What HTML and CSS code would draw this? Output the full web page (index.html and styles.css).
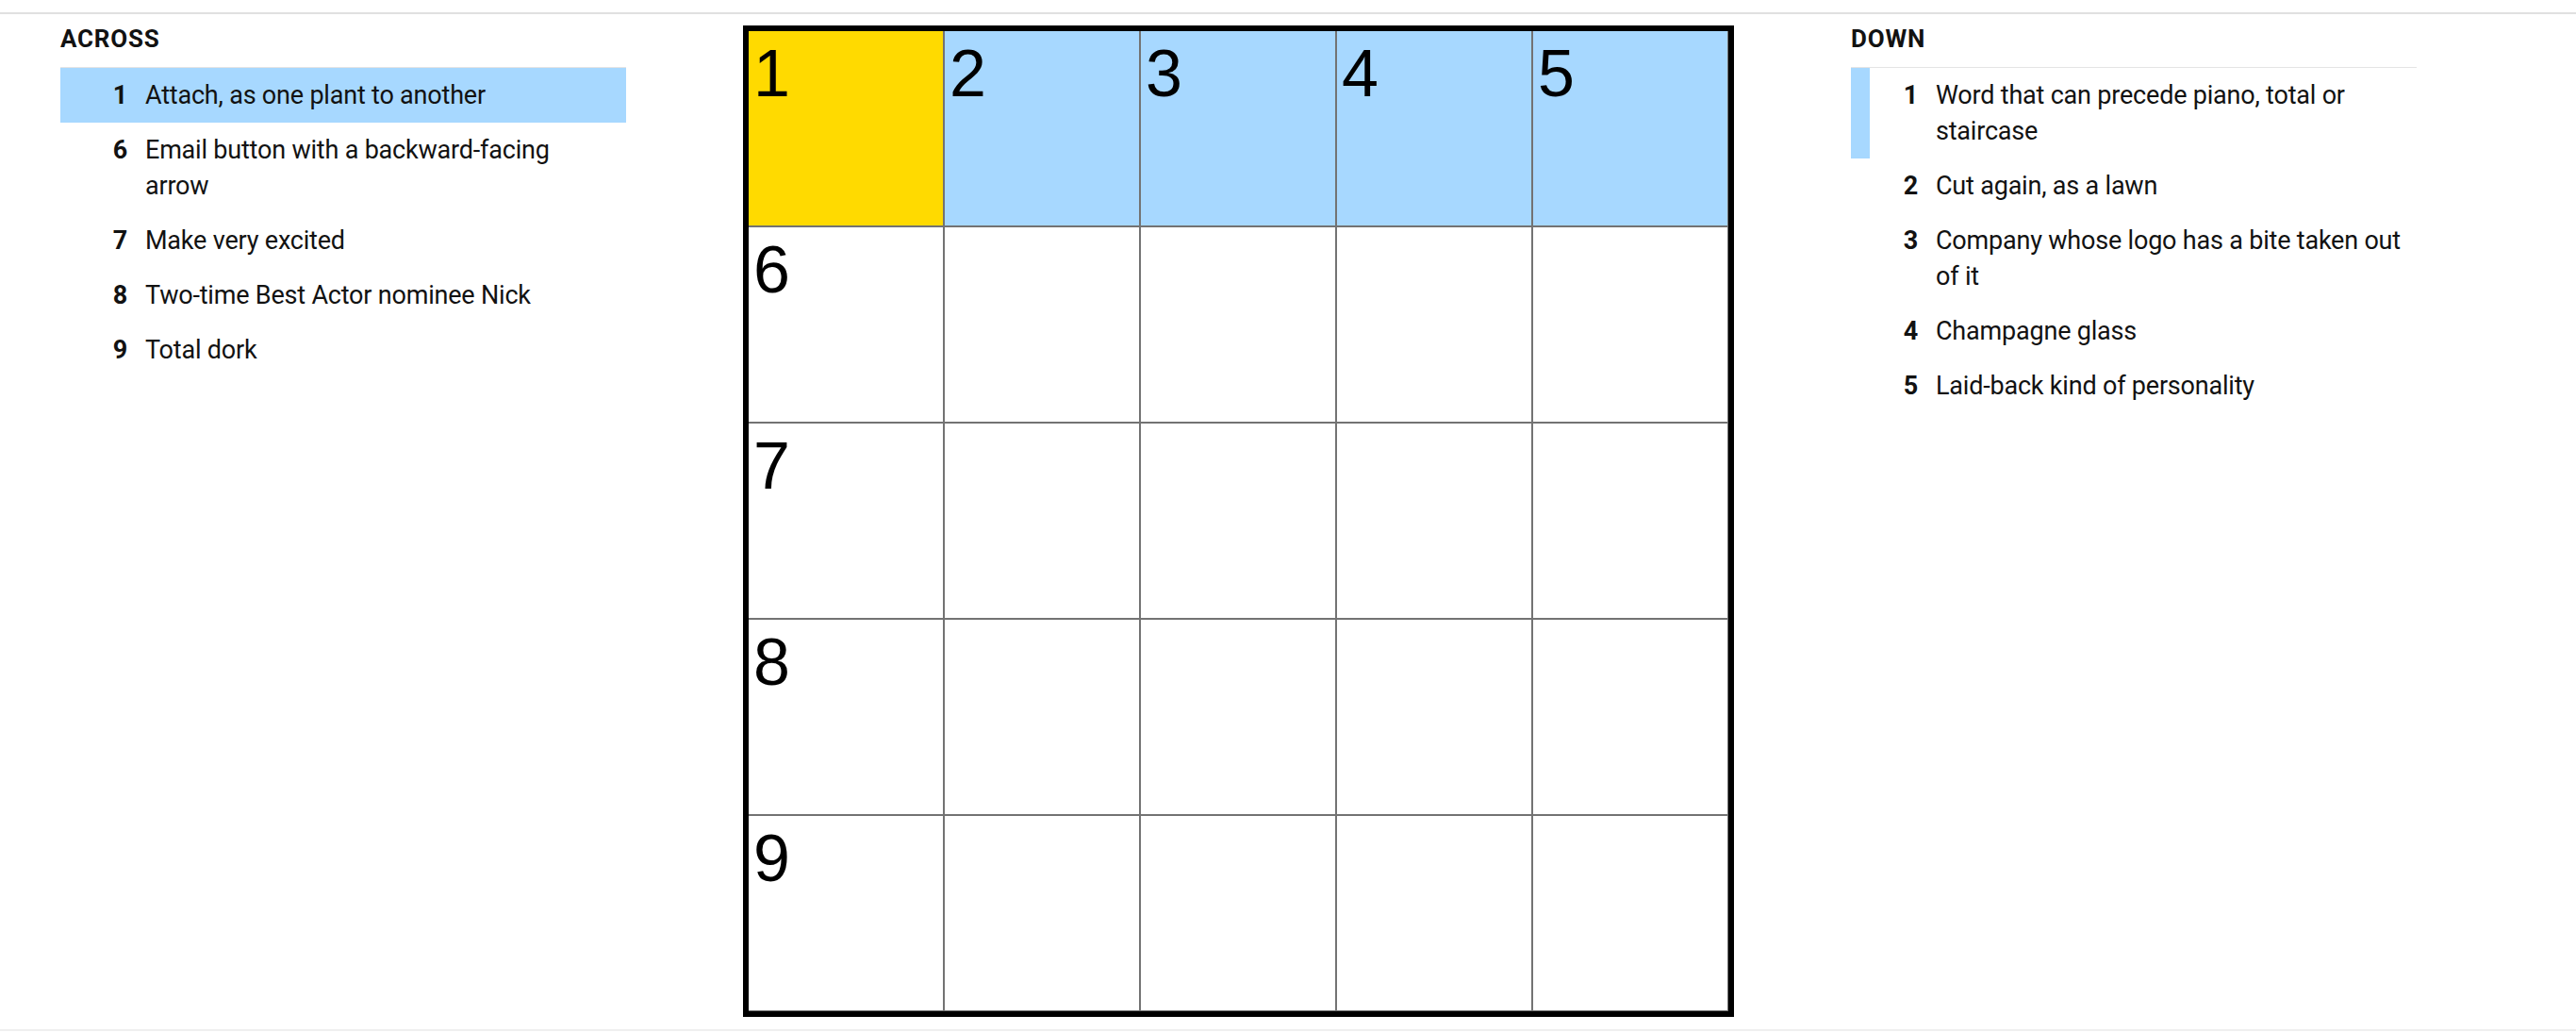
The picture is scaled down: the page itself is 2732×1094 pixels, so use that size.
FILE: index.html
```html
<!DOCTYPE html>
<html lang="en">
<head>
<meta charset="utf-8">
<title>Mini Crossword</title>
<link rel="stylesheet" href="styles.css">
</head>
<body>
<div class="topbar"></div>
<main class="layout">
  <section class="clues">
    <h3 class="clues-title">ACROSS</h3>
    <ol class="clue-list">
      <li class="clue selected"><span class="num">1</span><span class="text">Attach, as one plant to another</span></li>
      <li class="clue"><span class="num">6</span><span class="text">Email button with a backward-facing arrow</span></li>
      <li class="clue"><span class="num">7</span><span class="text">Make very excited</span></li>
      <li class="clue"><span class="num">8</span><span class="text">Two-time Best Actor nominee Nick</span></li>
      <li class="clue"><span class="num">9</span><span class="text">Total dork</span></li>
    </ol>
  </section>

  <div class="board">
    <div class="cell current"><span class="label">1</span></div>
    <div class="cell word"><span class="label">2</span></div>
    <div class="cell word"><span class="label">3</span></div>
    <div class="cell word"><span class="label">4</span></div>
    <div class="cell word"><span class="label">5</span></div>
    <div class="cell"><span class="label">6</span></div>
    <div class="cell"></div>
    <div class="cell"></div>
    <div class="cell"></div>
    <div class="cell"></div>
    <div class="cell"><span class="label">7</span></div>
    <div class="cell"></div>
    <div class="cell"></div>
    <div class="cell"></div>
    <div class="cell"></div>
    <div class="cell"><span class="label">8</span></div>
    <div class="cell"></div>
    <div class="cell"></div>
    <div class="cell"></div>
    <div class="cell"></div>
    <div class="cell"><span class="label">9</span></div>
    <div class="cell"></div>
    <div class="cell"></div>
    <div class="cell"></div>
    <div class="cell"></div>
  </div>

  <section class="clues">
    <h3 class="clues-title">DOWN</h3>
    <ol class="clue-list">
      <li class="clue related"><span class="num">1</span><span class="text">Word that can precede piano, total or staircase</span></li>
      <li class="clue"><span class="num">2</span><span class="text">Cut again, as a lawn</span></li>
      <li class="clue"><span class="num">3</span><span class="text">Company whose logo has a bite taken out of it</span></li>
      <li class="clue"><span class="num">4</span><span class="text">Champagne glass</span></li>
      <li class="clue"><span class="num">5</span><span class="text">Laid-back kind of personality</span></li>
    </ol>
  </section>
</main>
</body>
</html>
```

FILE: styles.css
```css
* {
  box-sizing: border-box;
}

body {
  margin: 0;
  background: #ffffff;
  color: #121212;
  font-family: Roboto, "Liberation Sans", Arial, sans-serif;
}

.topbar {
  height: 15px;
  border-bottom: 2px solid #e0e0e0;
}

.layout {
  display: flex;
  align-items: flex-start;
  gap: 124px;
  padding: 12px 0 13px 64px;
  border-bottom: 2px solid #efefef;
}

.clues {
  flex: none;
  width: 600px;
}

.clues-title {
  margin: 1px 0 17px;
  font-size: 26px;
  line-height: 26px;
  font-weight: 700;
  letter-spacing: 0.8px;
}

.clue-list {
  list-style: none;
  margin: 0;
  padding: 0;
  border-top: 1px solid #e4e4e4;
}

.clue {
  display: flex;
  align-items: flex-start;
  padding: 10px 12px 10px 0;
  border-left: 20px solid transparent;
  font-size: 27px;
  line-height: 38px;
  letter-spacing: -0.2px;
}

.clue.selected {
  background: #a7d8ff;
}

.clue.related {
  border-left-color: #a7d8ff;
}

.num {
  flex: none;
  width: 51px;
  text-align: right;
  font-weight: 700;
}

.text {
  margin-left: 19px;
}

.board {
  flex: none;
  display: grid;
  grid-template-columns: repeat(5, 206px);
  grid-auto-rows: 206px;
  gap: 2px;
  padding: 0 1px 1px 0;
  background: #737373;
  border: 6px solid #000000;
}

.cell {
  background: #ffffff;
  padding: 10px 0 0 5px;
  font-family: "Liberation Sans", Arial, sans-serif;
  font-size: 70px;
  line-height: 1;
  color: #000000;
}

.cell.word {
  background: #a7d8ff;
}

.cell.current {
  background: #ffda00;
}
```
